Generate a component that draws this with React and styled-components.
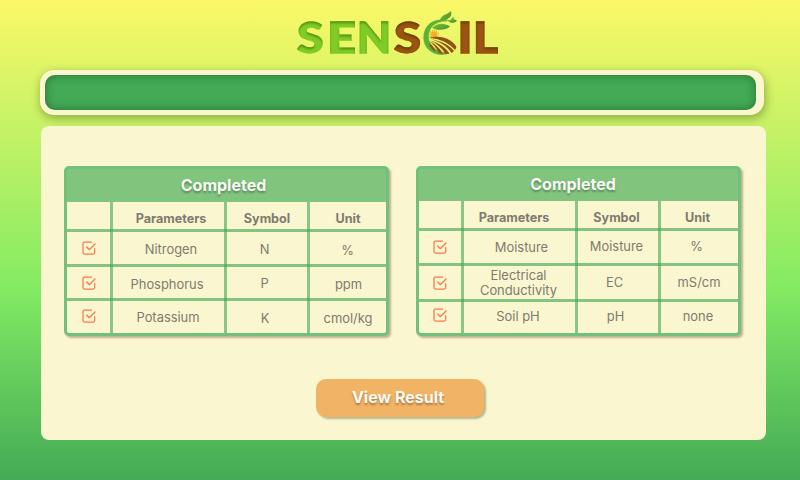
import React from "react";
import styled, { createGlobalStyle } from "styled-components";

const GlobalStyle = createGlobalStyle`
  * { box-sizing: border-box; }
  body { margin: 0; font-family: Inter, "Liberation Sans", sans-serif; }
`;

const Screen = styled.main`
  width: 800px;
  height: 480px;
  overflow: hidden;
  display: flex;
  flex-direction: column;
  background: linear-gradient(180deg, #fbf868 0%, #83eb63 60%, #44aa56 100%);
`;

const LogoArea = styled.header`
  height: 70px;
  flex: none;
`;

const TitleBar = styled.div`
  flex: none;
  width: 724.5px;
  height: 45px;
  margin-left: 39.5px;
  padding: 5px 8px 5px 5.5px;
  border-radius: 14px;
  background: #faf6cf;
  box-shadow: 1px 3px 8px 1px rgba(70, 90, 20, 0.42);
`;

const TitleField = styled.div`
  height: 100%;
  border-radius: 10px;
  background: #44aa56;
  box-shadow: inset 0 0 9px 1px rgba(20, 75, 30, 0.5);
`;

const Panel = styled.section`
  flex: none;
  width: 724.5px;
  height: 314.4px;
  margin: 11px 0 0 41px;
  padding-top: 40px;
  border-radius: 8px;
  background: #faf6cf;
  display: flex;
  flex-direction: column;
`;

const Tables = styled.div`
  display: flex;
  gap: 27px;
  padding-left: 23px;
`;

const Table = styled.div`
  width: 325px;
  height: 169.5px;
  border: 3px solid #72c17b;
  border-radius: 5px;
  box-shadow: 2px 2px 2px rgba(110, 85, 60, 0.42);
  background: #faf6cf;
  display: grid;
  grid-template-rows: ${(p) => p.$rows};
`;

const TableTitle = styled.div`
  display: flex;
  align-items: center;
  justify-content: center;
  padding: 0 ${(p) => p.$shift}px 2px 0;
  background: #81c47e;
  color: #f8f8f4;
  font-size: 16px;
  font-weight: 700;
  text-shadow: 0 2px 2px rgba(0, 0, 0, 0.3);
`;

const Row = styled.div`
  display: grid;
  grid-template-columns: ${(p) => p.$columns};
  border-bottom: ${(p) => (p.$last ? "0" : "3px")} solid rgba(68, 170, 86, 0.66);
`;

const Cell = styled.div`
  display: flex;
  align-items: center;
  justify-content: center;
  min-width: 0;
  margin-bottom: ${(p) => (p.$lastRow ? "0" : "-3px")};
  padding-bottom: ${(p) => (p.$lastRow ? "0" : "3px")};
  border-right: ${(p) => (p.$end ? "0" : "3px")} solid rgba(68, 170, 86, 0.62);
`;

const Label = styled.span`
  margin-left: ${(p) => p.$dx * 2}px;
  margin-top: ${(p) => p.$dy * 2}px;
  color: #7e7c70;
  font-size: ${(p) => (p.$strong ? "12.6px" : "12.9px")};
  line-height: 15px;
  font-weight: ${(p) => (p.$strong ? 700 : 400)};
  text-align: center;
  white-space: pre;
  flex: none;
`;

const Check = styled.svg`
  display: block;
  flex: none;
  width: 16px;
  height: 16px;
  margin-top: ${(p) => p.$dy * 2}px;
  margin-left: ${(p) => p.$dx * 2}px;
  fill: none;
  stroke: #f77a4b;
  stroke-width: 1.25;
  stroke-linecap: round;
  stroke-linejoin: round;
`;

const ResultButton = styled.button`
  width: 168px;
  height: 38px;
  margin: 43.5px 0 0 275px;
  padding: 0 4px 2px 0;
  border: 0;
  border-radius: 10px;
  background: #f1b364;
  box-shadow: 2px 2px 2px rgba(90, 90, 50, 0.4);
  color: #f8f8f4;
  font: 700 16px Inter, "Liberation Sans", sans-serif;
  text-shadow: 0 2px 2px rgba(0, 0, 0, 0.3);
`;

const LogoLetter = styled.text`
  font-family: Lato, sans-serif;
  font-weight: 900;
  font-size: 42px;
  stroke-width: 1.3;
`;

const letters = [
  ["S", 297, 26.5, "#80cc28"],
  ["E", 327, 29, "#80cc28"],
  ["N", 357, 34, "#80cc28"],
  ["S", 394, 27, "#9a5414"],
  ["I", 457.5, 15, "#9a5414"],
  ["L", 473, 25, "#9a5414"],
];

function Logo() {
  return (
    <svg width="800" height="70" viewBox="0 0 800 70" role="img" aria-label="SENSOIL">
      <defs>
        <filter id="inset" x="-20%" y="-20%" width="140%" height="140%">
          <feOffset in="SourceAlpha" dx="0.3" dy="1.8" result="o" />
          <feGaussianBlur in="o" stdDeviation="1.1" result="b" />
          <feComposite in="SourceAlpha" in2="b" operator="out" result="edge" />
          <feFlood floodColor="#1c2a00" floodOpacity="0.6" />
          <feComposite in2="edge" operator="in" result="shade" />
          <feMerge>
            <feMergeNode in="SourceGraphic" />
            <feMergeNode in="shade" />
          </feMerge>
        </filter>
        <linearGradient id="leaf" x1="0" y1="0" x2="1" y2="1">
          <stop offset="0" stopColor="#86c63a" />
          <stop offset="1" stopColor="#3b8f26" />
        </linearGradient>
      </defs>
      <g filter="url(#inset)">
        {letters.map(([c, x, w, fill], i) => (
          <LogoLetter key={i} x={x} y="53.3" textLength={w} lengthAdjust="spacingAndGlyphs" fill={fill} stroke={fill}>
            {c}
          </LogoLetter>
        ))}
      </g>
      <path
        d="M447 21 C433 17 423.5 26 423.7 38 C424 50 436 58 449 53 C438 53 429.5 47 428.5 38 C427.5 28 435 21 447 21Z"
        fill="#5fb037" stroke="#5fb037" strokeWidth="0.5"
      />
      <path d="M438 21 C443 19 449 20 452 22" fill="none" stroke="#5cab2d" />
      <path d="M440 20 C442 14 447 15 451 11 C453 17 447 21 440 20Z" fill="url(#leaf)" />
      <path d="M448.5 21.5 L454 16.5 L453.5 19 L457 20.5 C455 23.5 451 23.5 448.5 21.5Z" fill="url(#leaf)" />
      <path d="M432 28 C437 22.5 444 22.5 450 26.5 C446 30 438 31 432 28Z" fill="url(#leaf)" />
      <circle cx="434" cy="34.5" r="3.2" fill="#f0ae2c" />
      <circle cx="434" cy="34.5" r="4.3" fill="none" stroke="#e79b23" strokeWidth="1.3" strokeDasharray="1 1.2" />
      <g fill="#93501b">
        <path d="M429 38 C431 37 433 37 434 37 C445 36 453 41 456.5 47 L455 50 C449 43 440 38.5 429 38Z" />
        <path d="M431 39.5 C441 40.5 449 45 454 51 L451.5 53 C447 46 440 41.5 431 39.5Z" />
        <path d="M430.5 40.5 C439 43 445 47 449.5 53.5 L445.5 54 C442 48 437 43.5 430.5 40.5Z" />
        <path d="M429.5 41 C436 44.5 440.5 49 443 54 L439 53.2 C437 49 434 45 429.5 41Z" />
        <path d="M429 42.5 C433 46 435 49 436 52 C432 50 429.5 47 429 42.5Z" />
      </g>
    </svg>
  );
}

const leftTable = {
  titleShift: 6,
  columns: "46px 114px 83px 1fr",
  rows: "33px 30px 35px 34px 1fr",
  head: [["Parameters", 2.5, 3], ["Symbol", 0, 3], ["Unit", 0, 3]],
  body: [
    { check: [0.5, 0], cells: [["Nitrogen", 2.5, 1], ["N", -2.5, 1], ["%", -0.5, 2]] },
    { check: [0.5, 0.5], cells: [["Phosphorus", -1.5, 2], ["P", -2.5, 1], ["ppm", 0.5, 2]] },
    { check: [0.5, -0.5], cells: [["Potassium", -0.5, 1], ["K", -2, 2], ["cmol/kg", 0, 2]] },
  ],
};

const rightTable = {
  titleShift: 11,
  columns: "45px 114px 83px 1fr",
  rows: "32px 30px 35px 36px 1fr",
  head: [["Parameters", -5.5, 3], ["Symbol", -1.5, 3], ["Unit", -2, 3]],
  body: [
    { check: [0, 0], cells: [["Moisture", 2, 0.5], ["Moisture", -1.5, -0.5], ["%", -3, -0.5]] },
    { check: [0, 0], cells: [["Electrical\nConductivity", -1, 0.5], ["EC", -3.5, 0], ["mS/cm", -0.5, 0]] },
    { check: [0, -2], cells: [["Soil pH", -1.5, -0.5], ["pH", -2.5, -0.5], ["none", -1.5, -1]] },
  ],
};

function ParameterTable({ data }) {
  return (
    <Table $rows={data.rows}>
      <TableTitle $shift={data.titleShift}>Completed</TableTitle>
      <Row $columns={data.columns}>
        <Cell />
        {data.head.map(([text, dx, dy], i) => (
          <Cell key={text} $end={i === 2}>
            <Label $strong $dx={dx} $dy={dy}>{text}</Label>
          </Cell>
        ))}
      </Row>
      {data.body.map((row, r) => (
        <Row key={r} $columns={data.columns} $last={r === 2}>
          <Cell $lastRow={r === 2}>
            <Check viewBox="0 0 16 16" $dx={row.check[0]} $dy={row.check[1]}>
              <path d="M10.5 2H3.5Q2 2 2 3.5V12.5Q2 14 3.5 14H12.2Q13.7 14 13.7 12.5V8.5" />
              <path d="M5.7 7L8.3 9.7L14 4" />
            </Check>
          </Cell>
          {row.cells.map(([text, dx, dy], i) => (
            <Cell key={i} $end={i === 2} $lastRow={r === 2}>
              <Label $dx={dx} $dy={dy}>{text}</Label>
            </Cell>
          ))}
        </Row>
      ))}
    </Table>
  );
}

export default function App() {
  return (
    <>
      <GlobalStyle />
      <Screen>
        <LogoArea><Logo /></LogoArea>
        <TitleBar><TitleField /></TitleBar>
        <Panel>
          <Tables>
            <ParameterTable data={leftTable} />
            <ParameterTable data={rightTable} />
          </Tables>
          <ResultButton>View Result</ResultButton>
        </Panel>
      </Screen>
    </>
  );
}
